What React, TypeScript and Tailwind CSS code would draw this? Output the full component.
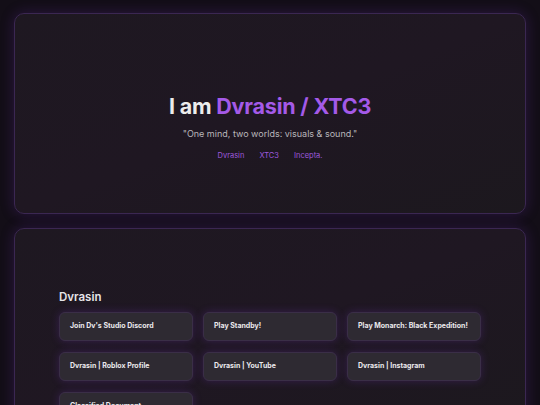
const links = ["Dvrasin", "XTC3", "Incepta."];

const buttons = [
  "Join Dv's Studio Discord",
  "Play Standby!",
  "Play Monarch: Black Expedition!",
  "Dvrasin | Roblox Profile",
  "Dvrasin | YouTube",
  "Dvrasin | Instagram",
  "Classified Document",
];

export default function App() {
  return (
    <div
      className="min-h-[405px] h-[405px] overflow-hidden bg-[#130e17] px-[14px] pt-[13px]"
      style={{ fontFamily: "Inter, 'Noto Sans', sans-serif" }}
    >
      {/* Hero card */}
      <section className="h-[201px] rounded-[10px] border border-[#3b2752] bg-gradient-to-br from-[#1e1821] via-[#1f1722] to-[#1c181e] shadow-[0_0_14px_rgba(120,50,200,0.25)] flex flex-col items-center justify-center">
        <h1 className="mt-[31px] text-[21.5px] font-bold leading-none tracking-[-0.2px] text-[#ececec]">
          I am <span className="text-[#a45ae8]">Dvrasin / XTC3</span>
        </h1>
        <p className="mt-[9px] text-[9px] text-[#b9b6bb]">"One mind, two worlds: visuals &amp; sound."</p>
        <div className="mt-[10px] flex gap-[15px] text-[7.5px] text-[#9d59dc]">
          {links.map((l) => (
            <span key={l}>{l}</span>
          ))}
        </div>
      </section>

      {/* Links card */}
      <section className="mt-[14px] h-[200px] rounded-[10px] border border-[#3b2752] bg-gradient-to-br from-[#1e1821] via-[#1f1722] to-[#1c181e] shadow-[0_0_14px_rgba(120,50,200,0.25)] px-[44px] pt-[63px]">
        <h2 className="text-[11.5px] font-semibold leading-none text-[#e6e4e8]">Dvrasin</h2>
        <div className="mt-[8px] grid grid-cols-[134px_134px_134px] gap-x-[10px] gap-y-[11px]">
          {buttons.map((b) => (
            <div
              key={b}
              className="h-[29px] rounded-[6px] border border-[#3a2e47] bg-[#2e2a32] shadow-[0_0_8px_rgba(110,50,180,0.3)] flex items-center px-[10px] whitespace-nowrap text-[7px] font-bold text-[#ebe9ed]"
            >
              {b}
            </div>
          ))}
        </div>
      </section>
    </div>
  );
}
